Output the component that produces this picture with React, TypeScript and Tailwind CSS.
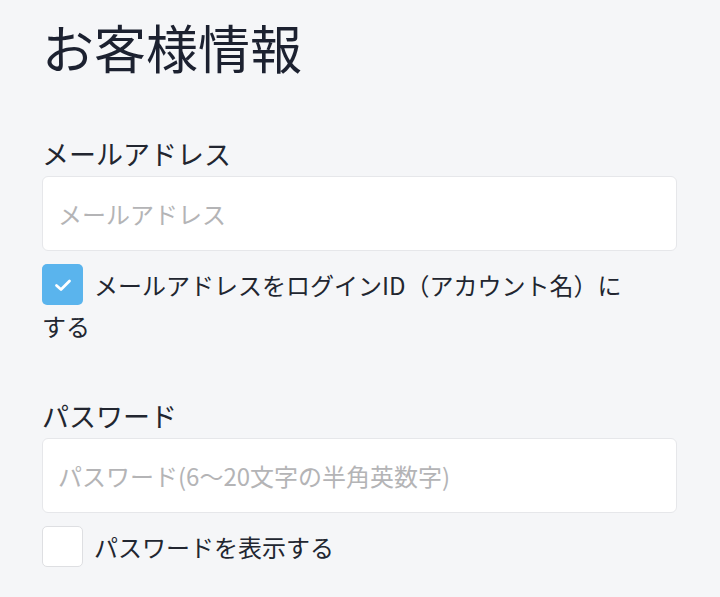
import React from "react";

const font = "font-['Noto_Sans_CJK_JP','Noto_Sans',sans-serif]";

function Check({ checked, label }: { checked?: boolean; label: string }) {
  return (
    <label className="block w-[588px] text-[24px] leading-[41px] text-[#222630]">
      {checked ? (
        <span className="mr-[11px] inline-flex h-[41px] w-[41px] items-center justify-center rounded-[5px] bg-[#5ab4ed] align-top">
          <svg width="18" height="14" viewBox="0 0 18 14" fill="none">
            <polyline
              points="2.5,7.5 7,11.5 15.5,3"
              stroke="white"
              strokeWidth="2.8"
              strokeLinecap="round"
              strokeLinejoin="round"
            />
          </svg>
        </span>
      ) : (
        <span className="mr-[11px] inline-block h-[41px] w-[41px] rounded-[5px] border border-[#dedfe2] bg-white align-top" />
      )}
      {label}
    </label>
  );
}

function Field({ label, placeholder, type = "text" }: { label: string; placeholder: string; type?: string }) {
  return (
    <div>
      <div className="text-[27px] leading-[40px] text-[#222630]">{label}</div>
      <input
        type={type}
        placeholder={placeholder}
        className={`mt-[2px] block h-[75px] w-[635px] rounded-[6px] border border-[#e6e7ea] bg-white px-[15px] text-[24px] outline-none placeholder:text-[#b4b4b6] ${font}`}
      />
    </div>
  );
}

export default function App() {
  return (
    <div className={`min-h-[597px] w-[720px] bg-[#f5f6f8] px-[42px] pt-[12px] ${font}`}>
      <h1 className="text-[52px] leading-[70px] font-normal text-[#1c2130]">お客様情報</h1>

      <div className="mt-[52px]">
        <Field label="メールアドレス" placeholder="メールアドレス" />
        <div className="mt-[13px]">
          <Check checked label="メールアドレスをログインID（アカウント名）にする" />
        </div>
      </div>

      <div className="mt-[50px]">
        <Field label="パスワード" placeholder="パスワード(6〜20文字の半角英数字)" type="password" />
        <div className="mt-[13px]">
          <Check label="パスワードを表示する" />
        </div>
      </div>
    </div>
  );
}
